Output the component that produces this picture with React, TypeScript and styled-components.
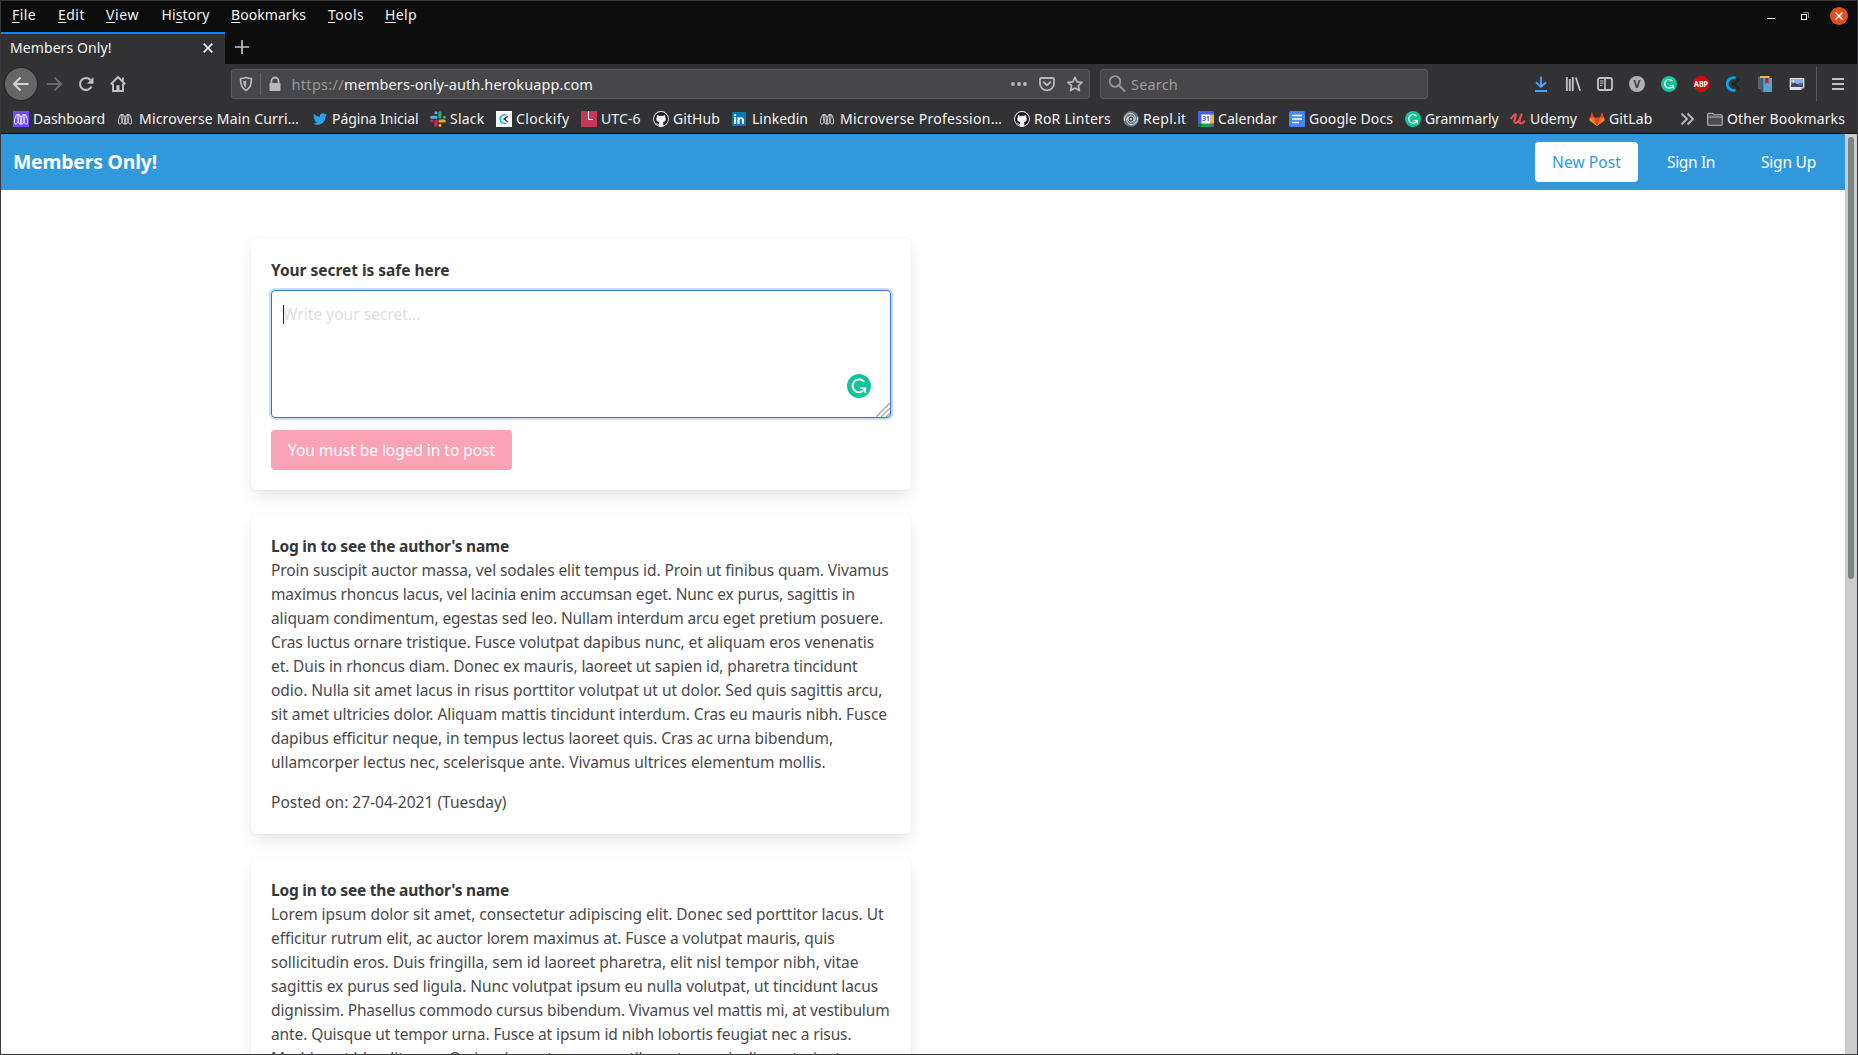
import React, { useLayoutEffect, useRef, useState } from 'react';
import styled, { createGlobalStyle } from 'styled-components';

const GlobalStyle = createGlobalStyle`
  *, *::before, *::after { box-sizing: border-box; }
  html, body { margin: 0; padding: 0; overflow: hidden; }
  body { font-family: "Noto Sans", "Open Sans", sans-serif; }
  svg { display: block; flex: none; }
`;

/* ---------- text that tracks itself to a measured width ---------- */

const Tracked = styled.span`
  display: inline-block;
  white-space: pre;
`;

function Fit({ w, children }: { w: number; children: React.ReactNode }) {
  const ref = useRef<HTMLSpanElement>(null);
  const [spacing, setSpacing] = useState(0);
  useLayoutEffect(() => {
    const el = ref.current;
    if (!el) return;
    const count = (el.textContent || '').length;
    setSpacing((w - el.getBoundingClientRect().width) / count);
  }, [w]);
  return (
    <Tracked ref={ref} style={{ letterSpacing: `${spacing}px` }}>
      {children}
    </Tracked>
  );
}

/* ---------- window chrome ---------- */

const Window = styled.div`
  width: 1858px;
  height: 1055px;
  border: 1px solid #38383a;
  display: flex;
  flex-direction: column;
  overflow: hidden;
  background: #fff;
`;

const MenuBar = styled.div`
  flex: none;
  height: 31px;
  background: #0c0c0d;
  color: #f4f4f5;
  display: flex;
  align-items: center;
  font-size: 14px;
  line-height: 20px;
  padding: 0 9px 3px 11px;
`;

const MenuItem = styled.div<{ $w: number }>`
  width: ${(p) => p.$w}px;
  flex: none;
  u { text-decoration-thickness: 1px; text-underline-offset: 2px; }
`;

const WindowButtons = styled.div`
  margin-left: auto;
  padding-top: 2px;
  display: grid;
  grid-template-columns: 34px 30px 18px;
  align-items: center;
`;

const TabStrip = styled.div`
  flex: none;
  height: 32px;
  background: #0c0c0d;
  display: flex;
`;

const Tab = styled.div`
  width: 224px;
  border-top: 2px solid #0a84ff;
  background: #323234;
  color: #f4f4f5;
  font-size: 14px;
  line-height: 20px;
  display: flex;
  align-items: center;
  justify-content: space-between;
  padding: 0 12px 2px 9px;
`;

const NewTab = styled.div`
  display: flex;
  padding: 8px 0 0 10px;
`;

const Toolbar = styled.div`
  flex: none;
  height: 40px;
  background: #323234;
  display: flex;
  align-items: center;
  padding-left: 4px;
  color: #b1b1b3;
`;

const BackButton = styled.div`
  width: 32px;
  height: 32px;
  border-radius: 50%;
  background: #666667;
  box-shadow: 0 0 0 1px #29292a;
  display: grid;
  place-items: center;
  color: #d4d4d5;
`;

const ToolSlot = styled.div<{ $dim?: boolean }>`
  width: 32px;
  height: 32px;
  display: grid;
  place-items: center;
  color: ${(p) => (p.$dim ? '#6b6b6d' : '#c3c3c5')};
`;

const NavTools = styled.div`
  display: flex;
  margin-left: 1px;
`;

const Field = styled.div<{ $w: number; $left: number }>`
  width: ${(p) => p.$w}px;
  height: 30px;
  margin-left: ${(p) => p.$left}px;
  border: 1px solid #5c5c5e;
  border-radius: 3px;
  background: #474749;
  display: flex;
  align-items: center;
  font-size: 14.5px;
  line-height: 20px;
  color: #f4f4f5;
  padding: 0 6px;
`;

const FieldDivider = styled.div`
  width: 1px;
  height: 22px;
  background: #65676f;
  margin: 0 6px 0 6px;
`;

const UrlText = styled.div`
  margin-left: 8.5px;
  flex: 1;
  white-space: nowrap;
`;

const Muted = styled.span`
  color: #98989a;
`;

const FieldIcons = styled.div`
  display: flex;
  gap: 12px;
  color: #b9b9bb;
`;

const SearchLabel = styled.div`
  margin-left: 4px;
  color: #9d9d9f;
`;

const Extensions = styled.div`
  margin-left: 97px;
  display: flex;
`;

const ToolDivider = styled.div`
  width: 1px;
  height: 34px;
  background: #5a5a5c;
  margin: 0 5px 0 3px;
`;

const BookmarkBar = styled.div`
  flex: none;
  height: 30px;
  background: #323234;
  border-bottom: 1px solid #0c0c0d;
  display: flex;
  align-items: center;
  padding: 0 0 0 12px;
  color: #f4f4f5;
  font-size: 14px;
  line-height: 20px;
`;

const Bookmark = styled.div<{ $w: number; $gap?: number }>`
  width: ${(p) => p.$w}px;
  flex: none;
  display: flex;
  align-items: center;
  gap: ${(p) => p.$gap ?? 4}px;
`;

/* ---------- page ---------- */

const Viewport = styled.div`
  flex: 1;
  min-height: 0;
  display: flex;
`;

const Page = styled.div`
  flex: 1;
  min-width: 0;
  overflow: hidden;
  color: #4a4a4a;
  font-size: 15.5px;
  line-height: 24px;
`;

const ScrollTrack = styled.div`
  width: 12px;
  background: #cdcdcd;
  padding: 3px 3px 0;
`;

const ScrollThumb = styled.div`
  height: 442px;
  border-radius: 3px;
  background: #7f8282;
`;

const Navbar = styled.nav`
  height: 56px;
  background: #3298dc;
  color: #fff;
  display: flex;
  align-items: center;
  justify-content: space-between;
  padding: 0 12px;
`;

const Brand = styled.div`
  font-size: 19.4px;
  font-weight: 700;
`;

const NavButtons = styled.div`
  display: flex;
  gap: 12px;
`;

const NavButton = styled.div<{ $w: number; $active?: boolean }>`
  width: ${(p) => p.$w}px;
  height: 40px;
  border-radius: 4px;
  display: flex;
  align-items: center;
  justify-content: center;
  background: ${(p) => (p.$active ? '#fff' : 'transparent')};
  color: ${(p) => (p.$active ? '#3298dc' : '#fff')};
`;

const Feed = styled.main`
  margin: 48px 0 0 250px;
  width: 660px;
  display: flex;
  flex-direction: column;
  gap: 24px;
`;

const Card = styled.section`
  border-radius: 6px;
  background: #fff;
  padding: 20px;
  box-shadow: 0 8px 16px -2px rgba(10, 10, 10, 0.1), 0 0 0 1px rgba(10, 10, 10, 0.02);
`;

const Title = styled.div`
  height: 24px;
  font-weight: 700;
  color: #363636;
`;

const SecretBox = styled.div`
  position: relative;
  height: 128px;
  margin: 8px 0 12px;
  border: 1px solid #3273dc;
  border-radius: 4px;
  box-shadow: 0 0 0 2px rgba(50, 115, 220, 0.25);
  padding: 11px;
  color: #dedede;
`;

const Caret = styled.div`
  position: absolute;
  left: 11px;
  top: 14px;
  width: 1px;
  height: 19px;
  background: #222;
`;

const GrammarlyBadge = styled.div`
  position: absolute;
  right: 19px;
  bottom: 19px;
`;

const ResizeGrip = styled.div`
  position: absolute;
  right: 0;
  bottom: 0;
`;

const SubmitButton = styled.div`
  width: 241px;
  height: 40px;
  border-radius: 4px;
  background: #f9a3b5;
  color: #fff;
  display: flex;
  align-items: center;
  justify-content: center;
`;

const Line = styled.div`
  height: 24px;
  white-space: nowrap;
`;

const PostedOn = styled.div`
  height: 24px;
  margin-top: 16px;
`;

/* ---------- icons ---------- */

const S = ({ s = 16, v, children }: { s?: number; v?: string; children: React.ReactNode }) => (
  <svg width={s} height={s} viewBox={v || '0 0 16 16'} fill="none">
    {children}
  </svg>
);

const Grammarly = ({ s = 16 }: { s?: number }) => (
  <S s={s} v="0 0 24 24">
    <circle cx="12" cy="12" r="12" fill="#15c39a" />
    <path d="M17.2 7.800A6.500 6.500 0 1 0 17.400 15.500" stroke="#fff" strokeWidth="1.800" />
    <path d="M13 14.300h5.300v4.600" stroke="#fff" strokeWidth="1.600" />
    <path d="M18.900 14v5l-3-3.600z" fill="#fff" />
  </S>
);

const Micro = ({ boxed }: { boxed?: boolean }) => (
  <S>
    {boxed && <rect width="16" height="16" fill="#6f4cff" />}
    <g stroke={boxed ? '#e9e2ff' : '#cfcfd1'} strokeWidth=".95">
      <ellipse cx="3.700" cy="8.300" rx="1.900" ry="4.900" transform="rotate(14 3.700 8.300)" />
      <ellipse cx="6.500" cy="8.300" rx="1.900" ry="4.900" transform="rotate(-14 6.500 8.300)" />
      <ellipse cx="9.700" cy="8.300" rx="1.900" ry="4.900" transform="rotate(14 9.700 8.300)" />
      <ellipse cx="12.400" cy="8.300" rx="1.900" ry="4.900" transform="rotate(-14 12.400 8.300)" />
    </g>
  </S>
);

const GitHub = () => (
  <S>
    <circle cx="8" cy="8" r="7.900" fill="#f4f4f4" />
    <circle cx="8" cy="8" r="7" fill="#1b1c20" />
    <path
      d="M4 4.200c.9-.1 1.700.4 2.200.8 1.200-.3 2.400-.3 3.600 0 .5-.4 1.300-.9 2.200-.8.3.8.3 1.400.1 1.900.6.700.8 1.400.7 2.200-.2 1.900-1.300 2.700-3 2.900.4.400.5.900.5 1.400V15.500H5.800V13.700c-1.600.2-2-.7-2.500-1.400-.2-.3-.5-.4-.6-.6.9-.2 1.400.3 1.700.9.400.6.900.6 1.500.4 0-.7.200-1.400.4-1.800-1.700-.2-2.800-1-3-2.900-.1-.8.100-1.500.6-2.200-.2-.5-.2-1.100.1-1.900z"
      fill="#f4f4f4"
    />
  </S>
);

const Twitter = () => (
  <S v="0 0 24 24">
    <path
      fill="#2aa3ef"
      d="M22.500 5.400c-.8.400-1.600.6-2.500.7.900-.5 1.600-1.400 1.900-2.400-.8.500-1.800.9-2.700 1.100A4.300 4.300 0 0 0 11.800 8.700C8.200 8.500 5 6.800 2.900 4.200c-1.100 2-.6 4.500 1.300 5.800-.7 0-1.400-.2-2-.5 0 2.100 1.500 3.900 3.500 4.300-.6.200-1.300.2-2 .1.600 1.700 2.200 3 4.100 3A8.700 8.700 0 0 1 1.500 18.700c1.900 1.200 4.200 1.900 6.600 1.900 8 0 12.500-6.700 12.200-12.900.9-.6 1.600-1.400 2.200-2.300z"
    />
  </S>
);

const Slack = () => (
  <S>
    <g strokeWidth="3.100" strokeLinecap="round">
      <path d="M1.700 6.200h4.200" stroke="#44bfdf" />
      <path d="M6 1.700v.1" stroke="#44bfdf" />
      <path d="M9.900 1.800v4.300" stroke="#2fac78" />
      <path d="M14.300 6.200h.1" stroke="#2fac78" />
      <path d="M10 10h4.300" stroke="#e3a72f" />
      <path d="M10 14.300v.1" stroke="#e3a72f" />
      <path d="M6 10v4.300" stroke="#d8235a" />
      <path d="M1.700 10h.1" stroke="#d8235a" />
    </g>
  </S>
);

const Clockify = () => (
  <S>
    <rect width="16" height="16" fill="#fff" />
    <path d="M10.400 4.200A4.300 4.300 0 1 0 10.400 11.800" stroke="#21aaf3" strokeWidth="1.500" />
    <path d="M11.700 5.200 8.600 8.100l3.100 2.900" stroke="#2b2f36" strokeWidth="1.200" />
    <circle cx="8.400" cy="8.100" r="1" fill="#2b2f36" />
  </S>
);

const Utc = () => (
  <S>
    <rect width="16" height="16" fill="#c93756" />
    <path d="M7.500 0v8.500H12" stroke="#fff" strokeWidth="1" />
  </S>
);

const Linkedin = () => (
  <S>
    <rect x="1" y="1" width="14" height="14" fill="#0a77b5" />
    <path d="M3.100 6.300h2V13h-2zM3.100 3.200h2v2h-2zM6.500 6.300h1.900v1c.9-1.500 4.500-1.600 4.500 1.700v4h-2V9.400c0-1.800-2.400-1.700-2.400 0V13h-2z" fill="#fff" />
  </S>
);

const Replit = () => (
  <S>
    <circle cx="8" cy="8" r="7.900" fill="#66757c" />
    <g stroke="#e6eaeb" strokeWidth="1" strokeLinecap="round">
      <path d="M1.500 9.500C.8 5 4.500 2 8 2.500c4 .5 5.600 5 3 8" />
      <path d="M14.500 6.500C15.200 11 11.500 14 8 13.500c-4-.5-5.600-5-3-8" />
      <path d="M5 8c0-2 1.500-3 3-3s3 1.200 3 3-1.500 3-3 3-3-1-3-3z" />
    </g>
    <circle cx="8" cy="8" r="2.300" fill="#3d464a" />
    <circle cx="8" cy="8" r="1" fill="#e6eaeb" />
  </S>
);

const CalDay = styled.text`
  font: 700 6.500px "Noto Sans", sans-serif;
`;

const Calendar = () => (
  <S>
    <rect width="16" height="16" rx="1.300" fill="#4a5ff0" />
    <path d="M12.500 3.500H16v9h-3.500z" fill="#fbbc04" />
    <path d="M3.500 12.500h9V16h-9z" fill="#00ac47" />
    <path d="M0 12.500h3.500V16H1.300A1.300 1.300 0 0 1 0 14.700z" fill="#00832d" />
    <path d="M12.500 12.500H16L12.500 16z" fill="#ea4335" />
    <rect x="3.500" y="3.500" width="9" height="9" fill="#fff" />
    <CalDay x="4.300" y="10.400" fill="#3b5bdb">31</CalDay>
  </S>
);

const Docs = () => (
  <S>
    <rect width="16" height="16" rx="1.500" fill="#4688f1" />
    <path d="M3 4.500h10M3 8h10M3 11.500h7" stroke="#fff" strokeWidth="1.600" />
  </S>
);

const Udemy = () => (
  <S>
    <path
      d="M1.200 7.300C2.600 6 4 3.500 5.400 3.200 6.800 3 4 8.500 4.300 10.600c.3 2.200 3.300 1.300 5-1.600l2.300-5.600M11.400 3.500C10.500 6.300 8.700 10.500 10 11.900c1.200 1.200 3.200-.3 4.200-1.500"
      stroke="#e8505b"
      strokeWidth="2.100"
      strokeLinecap="round"
      strokeLinejoin="round"
    />
  </S>
);

const GitLab = () => (
  <S>
    <path d="M8 15 .2 9.300 1 6.600h4.200z" fill="#fc9326" />
    <path d="M8 15l7.800-5.700-.8-2.700h-4.200z" fill="#fc9326" />
    <path d="M1 6.600 2.900 1l2.300 5.600zM15 6.600 13.100 1l-2.300 5.600z" fill="#e24329" />
    <path d="M1 6.600h4.200L8 15z" fill="#fc6d26" />
    <path d="M15 6.600h-4.200L8 15z" fill="#fc6d26" />
    <path d="M5.200 6.600h5.600L8 15z" fill="#e24329" />
  </S>
);

const Folder = () => (
  <S>
    <path d="M.7 13.300V3.200c0-.6.400-1 1-1h3.800l1.500 1.600h7.200c.6 0 1 .4 1 1v8.500c0 .6-.4 1-1 1H1.700c-.6 0-1-.4-1-1z" fill="#4c4c4e" stroke="#b9b9bb" strokeWidth="1.100" />
    <path d="M.9 6h14.300" stroke="#b9b9bb" strokeWidth="1" />
  </S>
);

const AbpText = styled.text`
  font: 700 8.200px "Noto Sans", sans-serif;
`;

const VText = styled.text`
  font: 700 10.500px "Noto Sans", sans-serif;
`;

const extensions: React.ReactNode[] = [
  <S key="down">
    <path d="M8 .5v10.200M3 6.300l5 4.700 5-4.700" stroke="#45a1ff" strokeWidth="1.900" />
    <path d="M2 15h12" stroke="#45a1ff" strokeWidth="2" />
  </S>,
  <S key="library">
    <path d="M1.800 1v14M4.800 3v12M7.800 1v14M10.800 1.500l4.400 13.200" stroke="currentColor" strokeWidth="1.800" />
  </S>,
  <S key="sidebar">
    <rect x="1" y="2" width="14" height="12" rx="2" stroke="currentColor" strokeWidth="1.800" />
    <path d="M8 2v12" stroke="currentColor" strokeWidth="1.600" />
    <path d="M3 5h3.500M3 7.200h3.500M3 9.400h2.500" stroke="currentColor" strokeWidth="1" />
  </S>,
  <S key="v">
    <circle cx="8" cy="8" r="8" fill="#b1b1b3" />
    <VText x="4.500" y="11.800" fill="#3a3a3c">V</VText>
  </S>,
  <Grammarly key="grammarly" />,
  <S key="abp">
    <path d="M4.700 0h6.600L16 4.700v6.600L11.300 16H4.700L0 11.300V4.700z" fill="#c70d0d" />
    <AbpText x="1" y="10.900" fill="#fff" textLength="14" lengthAdjust="spacingAndGlyphs">ABP</AbpText>
  </S>,
  <S key="clockify">
    <path d="M10.500 1.900A6.400 6.400 0 1 0 10.500 14.100" stroke="#03a9f4" strokeWidth="2.600" />
    <path d="M14.200 3.400 10 7M14.200 12.600 10 9" stroke="#1f2021" strokeWidth="1.700" />
    <circle cx="8.300" cy="8" r="1.500" fill="#1f2021" />
  </S>,
  <S key="books">
    <path d="M1 .5h3V13H1z" fill="#5b6265" />
    <path d="M4 1.500h2.200V16H4z" fill="#33627e" />
    <path d="M6.200 2H15v14H6.200z" fill="#5f9fc7" />
    <path d="M3 0h9.500v2H3z" fill="#f6bd3a" />
    <path d="M8.300 2h3.300v6L10 6.300 8.300 8z" fill="#b3202c" />
  </S>,
  <S key="picture">
    <path d="M.7 2h14.600v9.500L12 14H.7z" fill="#e4e4e4" />
    <path d="M2 3.500h12v7.300H2z" fill="#54719b" />
    <path d="M2 3.500h12v3L8 7.800 2 6z" fill="#8fb0dc" />
    <path d="M2 9l4-2 4 2.500 4-1v2.300H2z" fill="#2f4468" />
    <circle cx="4.300" cy="5.400" r="1.100" fill="#fff3b0" />
    <path d="M12 14v-2.500h3.300z" fill="#9c9c9c" />
  </S>,
];

/* ---------- data ---------- */

const menus: [string, string, string, number, number][] = [
  ['', 'F', 'ile', 24, 46],
  ['', 'E', 'dit', 27, 48],
  ['', 'V', 'iew', 33, 55.5],
  ['Hi', 's', 'tory', 48, 69.5],
  ['', 'B', 'ookmarks', 75, 97],
  ['', 'T', 'ools', 36, 57],
  ['', 'H', 'elp', 32, 50],
];

const bookmarks: [React.ReactNode, string, number, number, number?][] = [
  [<Micro boxed />, 'Dashboard', 72, 104],
  [<Micro />, 'Microverse Main Curri…', 160, 195, 6],
  [<Twitter />, 'Página Inicial', 86.5, 118],
  [<Slack />, 'Slack', 34.5, 66],
  [<Clockify />, 'Clockify', 53.5, 85],
  [<Utc />, 'UTC-6', 39.5, 72],
  [<GitHub />, 'GitHub', 47, 78],
  [<Linkedin />, 'Linkedin', 56, 88, 5],
  [<Micro />, 'Microverse Profession…', 162, 195, 5],
  [<GitHub />, 'RoR Linters', 77, 109],
  [<Replit />, 'Repl.it', 43.5, 75],
  [<Calendar />, 'Calendar', 59.5, 91],
  [<Docs />, 'Google Docs', 84, 116],
  [<Grammarly />, 'Grammarly', 73.5, 105],
  [<Udemy />, 'Udemy', 47, 79],
  [<GitLab />, 'GitLab', 43.5, 91],
];

type Post = { lines: [string, number][]; posted: string };

const posts: Post[] = [
  {
    lines: [
      ['Proin suscipit auctor massa, vel sodales elit tempus id. Proin ut finibus quam. Vivamus', 617.5],
      ['maximus rhoncus lacus, vel lacinia enim accumsan eget. Nunc ex purus, sagittis in', 584],
      ['aliquam condimentum, egestas sed leo. Nullam interdum arcu eget pretium posuere.', 612],
      ['Cras luctus ornare tristique. Fusce volutpat dapibus nunc, et aliquam eros venenatis', 603],
      ['et. Duis in rhoncus diam. Donec ex mauris, laoreet ut sapien id, pharetra tincidunt', 586.5],
      ['odio. Nulla sit amet lacus in risus porttitor volutpat ut ut dolor. Sed quis sagittis arcu,', 611.5],
      ['sit amet ultricies dolor. Aliquam mattis tincidunt interdum. Cras eu mauris nibh. Fusce', 616],
      ['dapibus efficitur neque, in tempus lectus laoreet quis. Cras ac urna bibendum,', 562],
      ['ullamcorper lectus nec, scelerisque ante. Vivamus ultrices elementum mollis.', 554.5],
    ],
    posted: 'Posted on: 27-04-2021 (Tuesday)',
  },
  {
    lines: [
      ['Lorem ipsum dolor sit amet, consectetur adipiscing elit. Donec sed porttitor lacus. Ut', 612.5],
      ['efficitur rutrum elit, ac auctor lorem maximus at. Fusce a volutpat mauris, quis', 563.5],
      ['sollicitudin eros. Duis fringilla, sem id laoreet pharetra, elit nisl tempor nibh, vitae', 587.5],
      ['sagittis ex purus sed ligula. Nunc volutpat ipsum eu nulla volutpat, ut tincidunt lacus', 607],
      ['dignissim. Phasellus commodo cursus bibendum. Vivamus vel mattis mi, at vestibulum', 618.5],
      ['ante. Quisque ut tempor urna. Fusce at ipsum id nibh lobortis feugiat nec a risus.', 580.5],
      ['Morbi eget blandit urna. Orci varius natoque penatibus et magnis dis parturient', 569.5],
    ],
    posted: 'Posted on: 27-04-2021 (Tuesday)',
  },
];

export default function App() {
  return (
    <Window>
      <GlobalStyle />
      <MenuBar>
        {menus.map(([a, key, b, w, slot]) => (
          <MenuItem key={a + key + b} $w={slot}>
            <Fit w={w}>
              {a}
              <u>{key}</u>
              {b}
            </Fit>
          </MenuItem>
        ))}
        <WindowButtons>
          <S s={10} v="0 0 10 10">
            <path d="M1 7.500h8" stroke="#fff" />
          </S>
          <S s={10} v="0 0 10 10">
            <path d="M3 1.500h5.500V7" stroke="#8a8a8a" />
            <rect x="1.500" y="3.500" width="5" height="5" stroke="#fff" />
          </S>
          <S s={18} v="0 0 18 18">
            <circle cx="9" cy="9" r="9" fill="#e34f1b" />
            <path d="M5.500 5.500l7 7M12.500 5.500l-7 7" stroke="#fff" strokeWidth="1.500" />
          </S>
        </WindowButtons>
      </MenuBar>
      <TabStrip>
        <Tab>
          <Fit w={101.5}>Members Only!</Fit>
          <S s={10} v="0 0 10 10">
            <path d="M.7.7l8.600 8.600M9.300.7.7 9.300" stroke="#f4f4f5" strokeWidth="1.700" />
          </S>
        </Tab>
        <NewTab>
          <S s={14} v="0 0 14 14">
            <path d="M7 0v14M0 7h14" stroke="#c3c3c5" strokeWidth="1.700" />
          </S>
        </NewTab>
      </TabStrip>
      <Toolbar>
        <BackButton>
          <S>
            <path d="M15.500 8H1.500M7.500 1.500 1 8l6.500 6.500" stroke="currentColor" strokeWidth="2" />
          </S>
        </BackButton>
        <NavTools>
          <ToolSlot $dim>
            <S>
              <path d="M.5 8h14M8.500 1.500 15 8l-6.500 6.500" stroke="currentColor" strokeWidth="2" />
            </S>
          </ToolSlot>
          <ToolSlot>
            <S>
              <path d="M13.500 10.500A6 6 0 1 1 12.500 4" stroke="currentColor" strokeWidth="2" />
              <path d="M15.500 1v6.700H9z" fill="currentColor" />
            </S>
          </ToolSlot>
          <ToolSlot>
            <S>
              <path d="M.7 8.300 8 1l7.300 7.300" stroke="currentColor" strokeWidth="1.900" strokeLinejoin="round" />
              <path d="M3 7.500V15h10V7.500" stroke="currentColor" strokeWidth="1.900" />
              <path d="M6.500 9.200h3V15h-3z" fill="currentColor" />
              <path d="M12 1.500h1.800V6H12z" fill="currentColor" />
            </S>
          </ToolSlot>
        </NavTools>
        <Field $w={859} $left={97}>
          <S>
            <path d="M8 1.500c2 .8 3.700 1 5.500 1 0 6-1 9.800-5.500 12C3.500 12.300 2.500 8.500 2.500 2.500c1.800 0 3.500-.2 5.500-1z" stroke="#b9b9bb" strokeWidth="1.700" strokeLinejoin="round" />
            <path d="M8.100 4.500c-1.200.4-2 .5-2.800.6.1 3.200.7 5.300 2.800 6.800z" fill="#b9b9bb" />
          </S>
          <FieldDivider />
          <S>
            <path d="M2.500 8c0-.6.400-1 1-1h9c.6 0 1 .4 1 1v6c0 .6-.4 1-1 1h-9c-.6 0-1-.4-1-1z" fill="#b9b9bb" />
            <path d="M4.500 7.500V5a3.500 3.500 0 0 1 7 0v2.500" stroke="#b9b9bb" strokeWidth="1.800" />
          </S>
          <UrlText>
            <Fit w={52.5}>
              <Muted>https://</Muted>
            </Fit>
            <Fit w={249}>members-only-auth.herokuapp.com</Fit>
          </UrlText>
          <FieldIcons>
            <S>
              <g fill="currentColor">
                <circle cx="2" cy="8" r="1.900" />
                <circle cx="8" cy="8" r="1.900" />
                <circle cx="14" cy="8" r="1.900" />
              </g>
            </S>
            <S>
              <path d="M2.200 2h11.600c.7 0 1.200.5 1.200 1.200V7.500a7 6.800 0 0 1-14 0V3.200C1 2.500 1.500 2 2.200 2z" stroke="currentColor" strokeWidth="1.800" />
              <path d="M4.700 6.200 8 9.300l3.300-3.100" stroke="currentColor" strokeWidth="1.900" strokeLinecap="round" />
            </S>
            <S>
              <path d="M8 1.300l2.100 4.500 4.900.6-3.600 3.300 1 4.900L8 12.100l-4.400 2.500 1-4.900L1 6.400l4.900-.6z" stroke="currentColor" strokeWidth="1.700" strokeLinejoin="round" />
            </S>
          </FieldIcons>
        </Field>
        <Field $w={328} $left={10}>
          <FieldIcons>
            <S s={20} v="0 0 20 20">
              <circle cx="8" cy="7.500" r="5.300" stroke="#98989a" strokeWidth="1.800" />
              <path d="M12 11.500l6 6" stroke="#98989a" strokeWidth="2" />
            </S>
          </FieldIcons>
          <SearchLabel>
            <Fit w={47}>Search</Fit>
          </SearchLabel>
        </Field>
        <Extensions>
          {extensions.map((icon, i) => (
            <ToolSlot key={i}>{icon}</ToolSlot>
          ))}
        </Extensions>
        <ToolDivider />
        <ToolSlot>
          <S>
            <path d="M2 3h12M2 8h12M2 13h12" stroke="currentColor" strokeWidth="1.900" />
          </S>
        </ToolSlot>
      </Toolbar>
      <BookmarkBar>
        {bookmarks.map(([icon, label, w, slot, gap], i) => (
          <Bookmark key={i} $w={slot} $gap={gap}>
            {icon}
            <Fit w={w}>{label}</Fit>
          </Bookmark>
        ))}
        <Bookmark $w={27}>
          <S>
            <path d="M1.500 2.500 7 8l-5.500 5.500M7.500 2.500 13 8l-5.500 5.500" stroke="#b9b9bb" strokeWidth="1.900" />
          </S>
        </Bookmark>
        <Bookmark $w={140}>
          <Folder />
          <Fit w={118}>Other Bookmarks</Fit>
        </Bookmark>
      </BookmarkBar>
      <Viewport>
        <Page>
          <Navbar>
            <Brand>
              <Fit w={144}>Members Only!</Fit>
            </Brand>
            <NavButtons>
              <NavButton $w={103} $active>
                <Fit w={69}>New Post</Fit>
              </NavButton>
              <NavButton $w={82}>
                <Fit w={48}>Sign In</Fit>
              </NavButton>
              <NavButton $w={89}>
                <Fit w={55}>Sign Up</Fit>
              </NavButton>
            </NavButtons>
          </Navbar>
          <Feed>
            <Card>
              <Title>
                <Fit w={178.5}>Your secret is safe here</Fit>
              </Title>
              <SecretBox>
                <Fit w={137.5}>Write your secret...</Fit>
                <Caret />
                <GrammarlyBadge>
                  <Grammarly s={24} />
                </GrammarlyBadge>
                <ResizeGrip>
                  <S s={14} v="0 0 14 14">
                    <path d="M0 14 14 0M5 14l9-9M10 14l4-4" stroke="#a9a9a9" strokeWidth="1.400" />
                  </S>
                </ResizeGrip>
              </SecretBox>
              <SubmitButton>
                <Fit w={207}>You must be loged in to post</Fit>
              </SubmitButton>
            </Card>
            {posts.map((post, i) => (
              <Card key={i}>
                <Title>
                  <Fit w={238}>Log in to see the author's name</Fit>
                </Title>
                {post.lines.map(([text, w]) => (
                  <Line key={text}>
                    <Fit w={w}>{text}</Fit>
                  </Line>
                ))}
                <PostedOn>
                  <Fit w={235.5}>{post.posted}</Fit>
                </PostedOn>
              </Card>
            ))}
          </Feed>
        </Page>
        <ScrollTrack>
          <ScrollThumb />
        </ScrollTrack>
      </Viewport>
    </Window>
  );
}
